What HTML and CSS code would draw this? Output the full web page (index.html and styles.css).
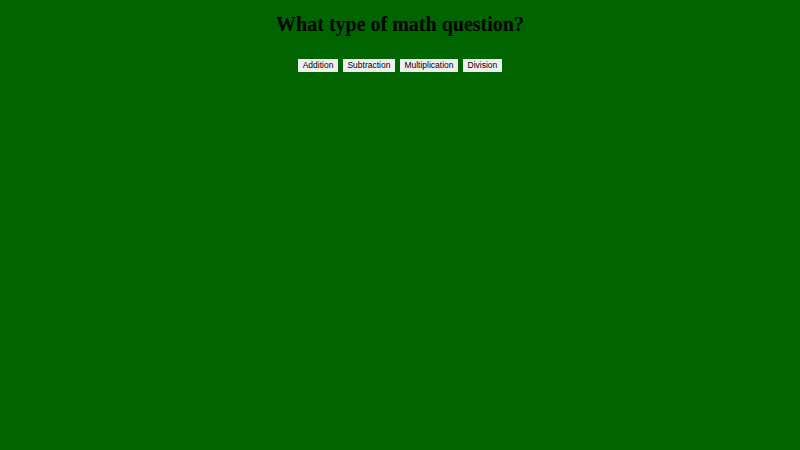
FILE: index.html
```html
<!DOCTYPE html>
<html>
<head>
<meta charset="utf-8">
<link rel="stylesheet" href="styles.css">
</head>
<body>
<div class="page">
  <h1 class="title">What type of math question?</h1>
  <div class="choices">
    <button class="choice">Addition</button>
    <button class="choice">Subtraction</button>
    <button class="choice">Multiplication</button>
    <button class="choice">Division</button>
  </div>
</div>
</body>
</html>
```
FILE: styles.css
```css
html, body {
  margin: 0;
  padding: 0;
  background: #006400;
  height: 100%;
}
.page {
  display: flex;
  flex-direction: column;
  align-items: center;
  padding-top: 12px;
}
.title {
  margin: 0;
  font-family: "Liberation Serif", "Times New Roman", serif;
  font-weight: bold;
  font-size: 20px;
  line-height: 25px;
  color: #000;
}
.choices {
  display: flex;
  gap: 5px;
  margin-top: 22px;
}
.choice {
  font-family: "Liberation Sans", Arial, sans-serif;
  font-size: 8.5px;
  line-height: 11px;
  padding: 1px 4.5px;
  border: none;
  border-radius: 0;
  background: #efefef;
  color: #000;
}
```
